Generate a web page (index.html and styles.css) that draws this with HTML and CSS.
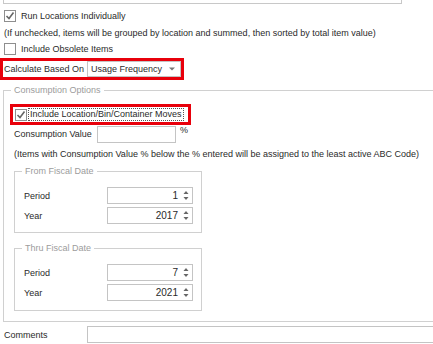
FILE: index.html
```html
<!DOCTYPE html>
<html lang="en">
<head>
    <meta charset="UTF-8">
    <title>ABC Code Options</title>
    <link rel="stylesheet" href="styles.css">
</head>
<body>

<div class="top-box"></div>

<!-- General options -->
<div class="row check-row first">
    <span class="check checked">
        <svg width="10" height="10" viewBox="0 0 10 10"><polyline points="1.5,5 4,7.5 8.5,1.5" fill="none" stroke="#666" stroke-width="1.6"/></svg>
    </span>
    <span>Run Locations Individually</span>
</div>
<div class="row note">(If unchecked, items will be grouped by location and summed, then sorted by total item value)</div>
<div class="row check-row">
    <span class="check"></span>
    <span>Include Obsolete Items</span>
</div>

<div class="highlight calc">
    <span class="calc-label">Calculate Based On</span>
    <div class="select">
        <span>Usage Frequency</span>
        <svg width="6" height="4" viewBox="0 0 6 4"><polygon points="0,0.5 6,0.5 3,3.5" fill="#777"/></svg>
    </div>
</div>

<!-- Consumption Options -->
<div class="group outer">
    <span class="legend">Consumption Options</span>

    <div class="highlight moves">
        <span class="check checked">
            <svg width="10" height="10" viewBox="0 0 10 10"><polyline points="1.5,5 4,7.5 8.5,1.5" fill="none" stroke="#666" stroke-width="1.6"/></svg>
        </span>
        <span class="focus">Include Location/Bin/Container Moves</span>
    </div>

    <div class="value-row">
        <span class="field-label">Consumption Value</span>
        <div class="input value-input"></div>
        <span class="pct">%</span>
    </div>
    <div class="row note inner-note">(Items with Consumption Value % below the % entered will be assigned to the least active ABC Code)</div>

    <div class="group date from">
        <span class="legend">From Fiscal Date</span>
        <div class="date-row">
            <span class="date-label">Period</span>
            <div class="input spin"><span>1</span><svg width="6" height="11" viewBox="0 0 6 11"><polygon points="0.5,4 5.5,4 3,1" fill="#666"/><polygon points="0.5,7 5.5,7 3,10" fill="#666"/></svg></div>
        </div>
        <div class="date-row">
            <span class="date-label">Year</span>
            <div class="input spin"><span>2017</span><svg width="6" height="11" viewBox="0 0 6 11"><polygon points="0.5,4 5.5,4 3,1" fill="#666"/><polygon points="0.5,7 5.5,7 3,10" fill="#666"/></svg></div>
        </div>
    </div>

    <div class="group date thru">
        <span class="legend">Thru Fiscal Date</span>
        <div class="date-row">
            <span class="date-label">Period</span>
            <div class="input spin"><span>7</span><svg width="6" height="11" viewBox="0 0 6 11"><polygon points="0.5,4 5.5,4 3,1" fill="#666"/><polygon points="0.5,7 5.5,7 3,10" fill="#666"/></svg></div>
        </div>
        <div class="date-row">
            <span class="date-label">Year</span>
            <div class="input spin"><span>2021</span><svg width="6" height="11" viewBox="0 0 6 11"><polygon points="0.5,4 5.5,4 3,1" fill="#666"/><polygon points="0.5,7 5.5,7 3,10" fill="#666"/></svg></div>
        </div>
    </div>
</div>

<div class="comments-row">
    <span class="comments-label">Comments</span>
    <div class="input comments-input"></div>
</div>

</body>
</html>
```

FILE: styles.css
```css
body {
    font-family: "Liberation Sans", Arial, sans-serif;
    font-size: 9px;
    color: #2a2a2a;
    margin: 0;
    width: 433px;
    height: 344px;
    overflow: hidden;
    background: #fff;
}
.top-box {
    width: 397px;
    height: 3px;
    margin-left: 3px;
    border: 1px solid #c8c8c8;
    border-top: none;
}
.row {
    display: flex;
    align-items: center;
    height: 16px;
    padding-left: 4px;
}
.check-row {
    gap: 5px;
}
.first {
    margin-top: 4px;
}
.note {
    margin-top: 1px;
}
.check {
    width: 10px;
    height: 10px;
    border: 1px solid #8e8e8e;
    background: #fff;
    display: flex;
    align-items: center;
    justify-content: center;
    flex-shrink: 0;
}
.highlight {
    border: 3px solid #e8000b;
    display: flex;
    align-items: center;
    box-sizing: border-box;
}
.calc {
    width: 184px;
    height: 22px;
    margin-top: 1px;
    padding-left: 1px;
}
.calc-label {
    width: 83px;
}
.select {
    width: 94px;
    height: 16px;
    border: 1px solid #c4c4c4;
    box-sizing: border-box;
    display: flex;
    align-items: center;
    justify-content: space-between;
    padding: 0 5px 0 3px;
}
.group {
    position: relative;
    border: 1px solid #d0d0d0;
    box-sizing: border-box;
}
.legend {
    position: absolute;
    top: -7px;
    left: 7px;
    padding: 0 3px;
    background: #fff;
    color: #9c9c9c;
    line-height: 12px;
}
.outer {
    margin-top: 10px;
    margin-left: 3px;
    width: 430px;
    height: 232px;
    padding-top: 13px;
    border-right: none;
}
.moves {
    width: 181px;
    height: 21px;
    margin-left: 6px;
    padding-left: 2px;
    gap: 2px;
}
.focus {
    outline: 1px dotted #555;
    padding: 0 1px;
    line-height: 11px;
}
.value-row {
    display: flex;
    align-items: flex-start;
    height: 17px;
    margin-top: 1px;
    padding-left: 10px;
}
.field-label {
    width: 83px;
    line-height: 17px;
}
.input {
    border: 1px solid #c4c4c4;
    box-sizing: border-box;
    background: #fff;
}
.value-input {
    width: 79px;
    height: 17px;
}
.pct {
    margin-left: 4px;
    line-height: 9px;
}
.inner-note {
    margin-top: 3px;
    padding-left: 10px;
}
.date {
    margin-left: 10px;
    width: 188px;
    padding: 15px 0 0 9px;
}
.from {
    margin-top: 9px;
    height: 62px;
}
.thru {
    margin-top: 15px;
    height: 63px;
}
.date-row {
    display: flex;
    align-items: center;
    height: 17px;
    margin-bottom: 3px;
}
.date-label {
    width: 83px;
}
.spin {
    width: 86px;
    height: 17px;
    display: flex;
    align-items: center;
    justify-content: flex-end;
    gap: 5px;
    padding-right: 3px;
    font-size: 10px;
}
.comments-row {
    display: flex;
    align-items: center;
    margin-top: 4px;
    padding-left: 4px;
}
.comments-label {
    width: 83px;
}
.comments-input {
    width: 346px;
    height: 17px;
    border-right: none;
}
```
